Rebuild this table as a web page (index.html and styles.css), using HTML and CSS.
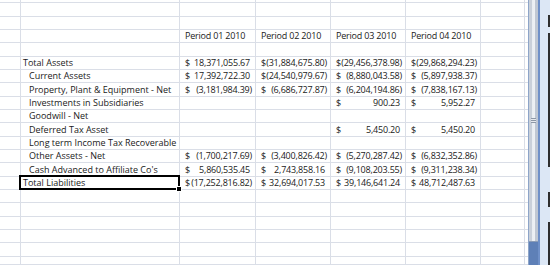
FILE: index.html
```html
<!DOCTYPE html>
<html>
<head>
<meta charset="utf-8">
<link rel="stylesheet" href="styles.css">
</head>
<body>
<div class="screen">
  <div class="sheet">
    <div class="row"><div class="c"></div><div class="c"></div><div class="c"></div><div class="c"></div><div class="c"></div><div class="c"></div><div class="c"></div><div class="c e"></div></div>
    <div class="row"><div class="c"></div><div class="c"></div><div class="c"></div><div class="c"></div><div class="c"></div><div class="c"></div><div class="c"></div><div class="c e"></div></div>
    <div class="row"><div class="c"></div><div class="c"></div><div class="c"></div><div class="c"></div><div class="c"></div><div class="c"></div><div class="c"></div><div class="c e"></div></div>
    <div class="row"><div class="c"></div><div class="c"></div><div class="c hd">Period 01 2010</div><div class="c hd">Period 02 2010</div><div class="c hd">Period 03 2010</div><div class="c hd">Period 04 2010</div><div class="c"></div><div class="c e"></div></div>
    <div class="row"><div class="c"></div><div class="c"></div><div class="c"></div><div class="c"></div><div class="c"></div><div class="c"></div><div class="c"></div><div class="c e"></div></div>
    <div class="row"><div class="c"></div><div class="c lbl">Total Assets</div><div class="c num"><span>$</span><span class="pos">18,371,055.67</span></div><div class="c num"><span>$</span><span>(31,884,675.80)</span></div><div class="c num"><span>$</span><span>(29,456,378.98)</span></div><div class="c num"><span>$</span><span>(29,868,294.23)</span></div><div class="c"></div><div class="c e"></div></div>
    <div class="row"><div class="c"></div><div class="c lbl ind">Current Assets</div><div class="c num"><span>$</span><span class="pos">17,392,722.30</span></div><div class="c num"><span>$</span><span>(24,540,979.67)</span></div><div class="c num"><span>$</span><span>(8,880,043.58)</span></div><div class="c num"><span>$</span><span>(5,897,938.37)</span></div><div class="c"></div><div class="c e"></div></div>
    <div class="row"><div class="c"></div><div class="c lbl ind">Property, Plant &amp; Equipment - Net</div><div class="c num"><span>$</span><span>(3,181,984.39)</span></div><div class="c num"><span>$</span><span>(6,686,727.87)</span></div><div class="c num"><span>$</span><span>(6,204,194.86)</span></div><div class="c num"><span>$</span><span>(7,838,167.13)</span></div><div class="c"></div><div class="c e"></div></div>
    <div class="row"><div class="c"></div><div class="c lbl ind">Investments in Subsidiaries</div><div class="c"></div><div class="c"></div><div class="c num"><span>$</span><span class="pos">900.23</span></div><div class="c num"><span>$</span><span class="pos">5,952.27</span></div><div class="c"></div><div class="c e"></div></div>
    <div class="row"><div class="c"></div><div class="c lbl ind">Goodwill - Net</div><div class="c"></div><div class="c"></div><div class="c"></div><div class="c"></div><div class="c"></div><div class="c e"></div></div>
    <div class="row"><div class="c"></div><div class="c lbl ind">Deferred Tax Asset</div><div class="c"></div><div class="c"></div><div class="c num"><span>$</span><span class="pos">5,450.20</span></div><div class="c num"><span>$</span><span class="pos">5,450.20</span></div><div class="c"></div><div class="c e"></div></div>
    <div class="row"><div class="c"></div><div class="c lbl ind">Long term Income Tax Recoverable</div><div class="c"></div><div class="c"></div><div class="c"></div><div class="c"></div><div class="c"></div><div class="c e"></div></div>
    <div class="row"><div class="c"></div><div class="c lbl ind">Other Assets - Net</div><div class="c num"><span>$</span><span>(1,700,217.69)</span></div><div class="c num"><span>$</span><span>(3,400,826.42)</span></div><div class="c num"><span>$</span><span>(5,270,287.42)</span></div><div class="c num"><span>$</span><span>(6,832,352.86)</span></div><div class="c"></div><div class="c e"></div></div>
    <div class="row"><div class="c"></div><div class="c lbl ind">Cash Advanced to Affiliate Co's</div><div class="c num"><span>$</span><span class="pos">5,860,535.45</span></div><div class="c num"><span>$</span><span class="pos">2,743,858.16</span></div><div class="c num"><span>$</span><span>(9,108,203.55)</span></div><div class="c num"><span>$</span><span>(9,311,238.34)</span></div><div class="c"></div><div class="c e"></div></div>
    <div class="row"><div class="c"></div><div class="c lbl sel">Total Liabilities</div><div class="c num"><span>$</span><span>(17,252,816.82)</span></div><div class="c num"><span>$</span><span class="pos">32,694,017.53</span></div><div class="c num"><span>$</span><span class="pos">39,146,641.24</span></div><div class="c num"><span>$</span><span class="pos">48,712,487.63</span></div><div class="c"></div><div class="c e"></div></div>
    <div class="row"><div class="c"></div><div class="c"></div><div class="c"></div><div class="c"></div><div class="c"></div><div class="c"></div><div class="c"></div><div class="c e"></div></div>
    <div class="row"><div class="c"></div><div class="c"></div><div class="c"></div><div class="c"></div><div class="c"></div><div class="c"></div><div class="c"></div><div class="c e"></div></div>
    <div class="row"><div class="c"></div><div class="c"></div><div class="c"></div><div class="c"></div><div class="c"></div><div class="c"></div><div class="c"></div><div class="c e"></div></div>
    <div class="row"><div class="c"></div><div class="c"></div><div class="c"></div><div class="c"></div><div class="c"></div><div class="c"></div><div class="c"></div><div class="c e"></div></div>
    <div class="row"><div class="c"></div><div class="c"></div><div class="c"></div><div class="c"></div><div class="c"></div><div class="c"></div><div class="c"></div><div class="c e"></div></div>
    <div class="row"><div class="c"></div><div class="c"></div><div class="c"></div><div class="c"></div><div class="c"></div><div class="c"></div><div class="c"></div><div class="c e"></div></div>
  </div>
  <div class="vscroll">
    <div class="sb-edge"></div>
    <div class="sb-track">
      <div class="sb-thumb"><div class="sb-grip"></div></div>
      <div class="sb-rest"></div>
    </div>
    <div class="sb-line"></div>
    <div class="panel"></div>
    <div class="panel-dark">
      <div class="pd-gap g1"></div>
      <div class="pd-bar b1"></div>
      <div class="pd-gap g2"></div>
      <div class="pd-bar b2"></div>
      <div class="pd-gap g3"></div>
      <div class="pd-bar b3"></div>
      <div class="pd-gap g4"></div>
      <div class="pd-bar b4"></div>
    </div>
  </div>
</div>
</body>
</html>
```
FILE: styles.css
```css
html, body {
  margin: 0;
  padding: 0;
  background: #ffffff;
  overflow: hidden;
}

body {
  font-family: "Open Sans", "Liberation Sans", sans-serif;
  font-size: 9px;
  color: #1a1a1a;
}

.screen {
  display: flex;
  width: 550px;
  height: 265px;
}

.sheet {
  display: grid;
  width: 528px;
  height: 265px;
  grid-template-columns: 21px 159px 76px 75px 75px 75px 44px 3px;
  grid-template-rows: 3.33px repeat(19, 13.333px) 1fr;
}

.row {
  display: contents;
}

.c {
  box-sizing: border-box;
  border-right: 1px solid #dadee7;
  border-bottom: 1px solid #dadee7;
  display: flex;
  align-items: flex-end;
  white-space: nowrap;
  line-height: 11px;
  padding-bottom: 1px;
  min-width: 0;
}

.c.e {
  border-right: none;
}

.hd {
  padding-left: 5px;
  letter-spacing: -0.2px;
}

.lbl {
  padding-left: 2px;
}

.lbl.ind {
  padding-left: 8px;
}

.num {
  justify-content: space-between;
  padding-left: 5px;
  padding-right: 3px;
  letter-spacing: -0.2px;
}

.num .pos {
  padding-right: 2px;
}

.sel {
  position: relative;
}

.sel::after {
  content: "";
  position: absolute;
  left: -2px;
  top: -2px;
  right: -1px;
  bottom: -1px;
  border: 2px solid #000000;
}

.sel::before {
  content: "";
  position: absolute;
  right: -3px;
  bottom: -3px;
  width: 4px;
  height: 4px;
  background: #000000;
  border: 1px solid #ffffff;
  z-index: 2;
}

/* vertical scrollbar + side panel */
.vscroll {
  display: flex;
  width: 22px;
  height: 265px;
}

.sb-edge {
  width: 1px;
  background: #8ea5c9;
}

.sb-track {
  width: 9px;
  display: flex;
  flex-direction: column;
}

.sb-thumb {
  height: 242px;
  box-sizing: border-box;
  border-bottom: 1px solid #8b9cb6;
  background: linear-gradient(90deg, #c9d0da 0, #c9d0da 3px, #e9edf2 3px, #eef1f5 6px, #bfc7d3 6px, #bfc7d3 100%);
  display: flex;
  align-items: center;
  justify-content: center;
}

.sb-grip {
  width: 5px;
  height: 5px;
  background: repeating-linear-gradient(180deg, #8d97a6 0, #8d97a6 1px, #e6e9ee 1px, #e6e9ee 2px);
}

.sb-rest {
  flex: 1;
  background: #5e80b7;
}

.sb-line {
  width: 2px;
  background: #6f90c8;
}

.panel {
  width: 8px;
  background: #dce7f5;
}

.panel-dark {
  width: 2px;
  display: flex;
  flex-direction: column;
}

.pd-gap { background: #dce7f5; }
.pd-bar { background: #2e2e2e; }
.g1 { height: 15px; }
.b1 { height: 12px; }
.g2 { height: 6px; }
.b2 { height: 134px; }
.g3 { height: 25px; }
.b3 { height: 15px; }
.g4 { height: 15px; }
.b4 { flex: 1; }
```
